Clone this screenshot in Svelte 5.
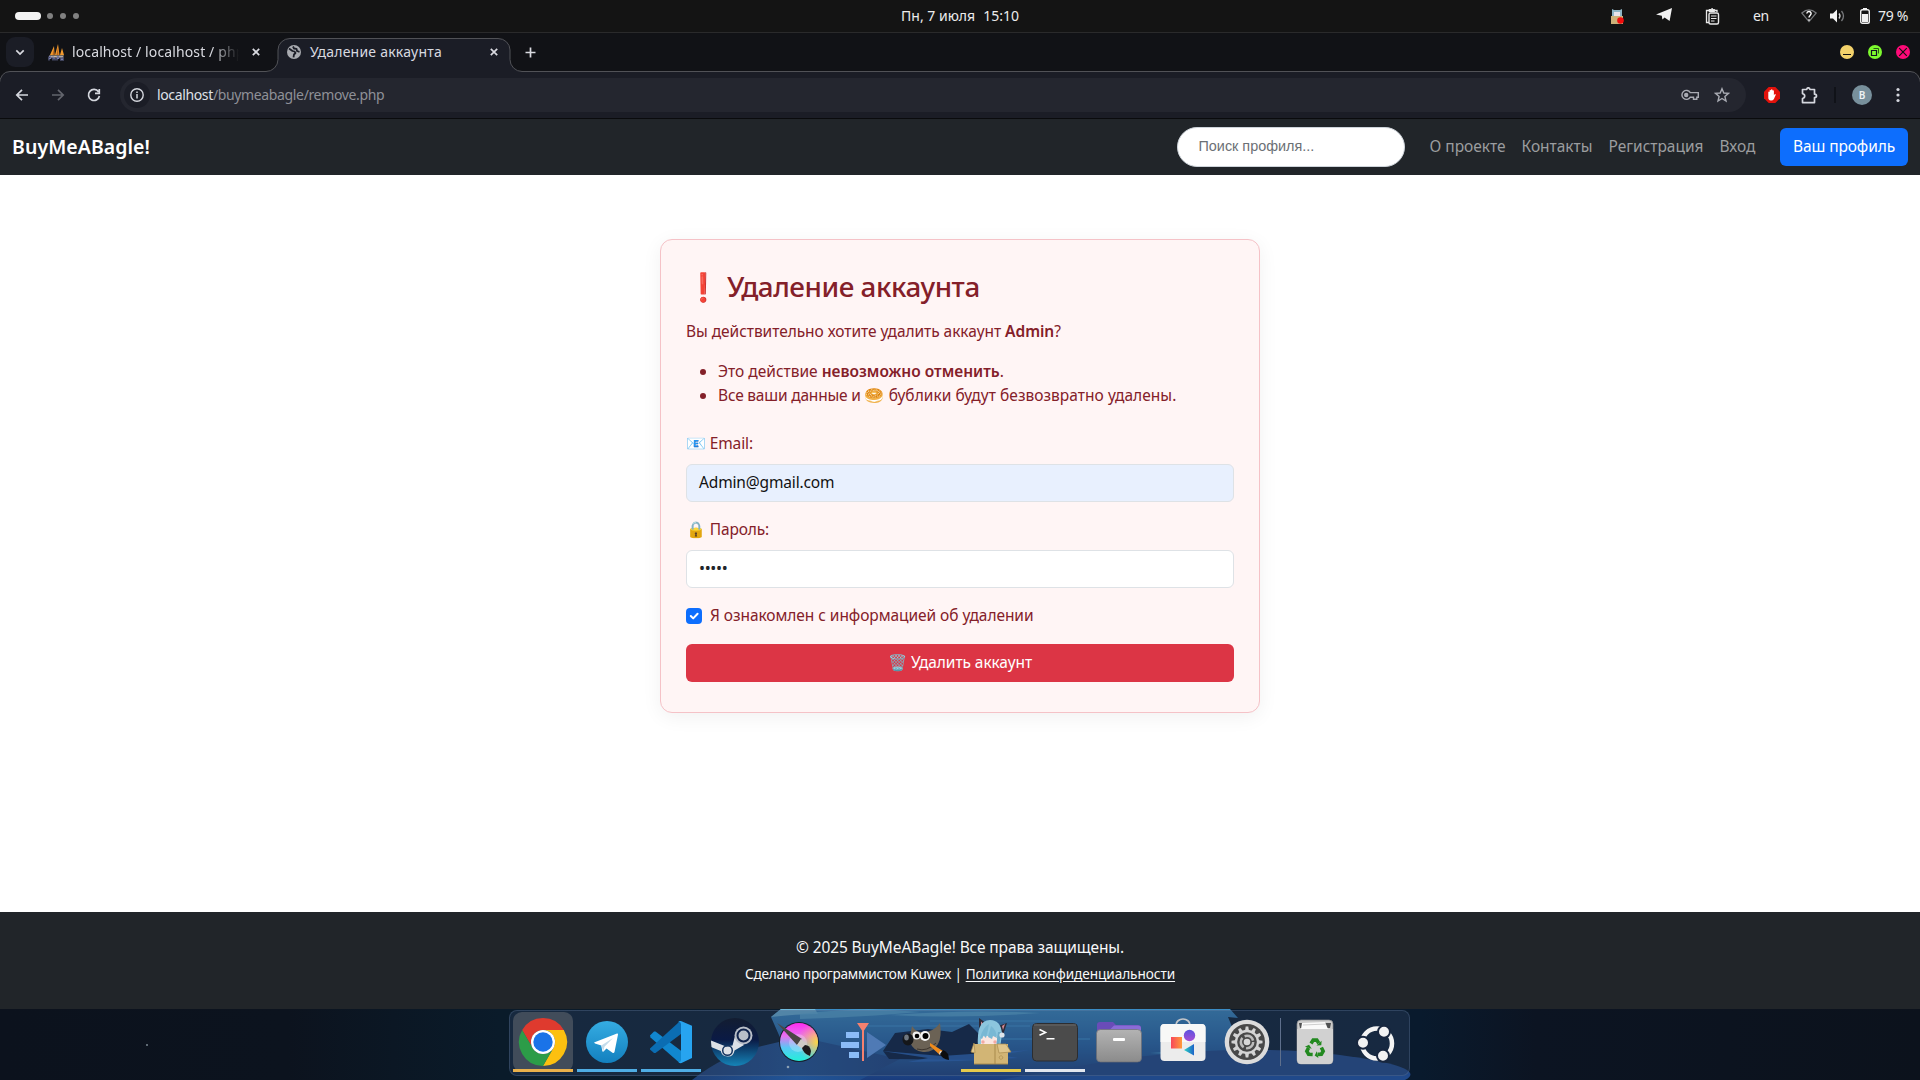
<script>
  const navLinks = ['О проекте', 'Контакты', 'Регистрация', 'Вход'];
  const teeth = Array.from({ length: 12 }, (_, i) => i * 30);
  let email = 'Admin@gmail.com';
  const mask = '•••••';
</script>

<div class="desktop">
  <header class="topbar">
    <div class="workspaces"><span class="pill"></span><i></i><i></i><i></i></div>
    <div class="clock"><span>Пн, 7 июля</span><span>15:10</span></div>
    <div class="tray">
      <svg class="ic-mascot" width="16" height="16" viewBox="0 0 16 16">
        <path d="M3 1l2 1h6l2-1v8H3z" fill="#8fb6c6" />
        <path d="M5 4h6v5H5z" fill="#e9e4ea" />
        <path d="M2 8h12v8H2z" fill="#cdb179" />
        <circle cx="11.5" cy="12.5" r="3.3" fill="#f20d0d" />
      </svg>
      <svg class="ic-plane" width="16" height="14" viewBox="0 0 16 14"><path d="M0 6.5L16 0l-2.4 13-5-3.6-2.2 2-.6-3.600z" fill="#f2f2f2" /></svg>
      <svg class="ic-clip" width="15" height="17" viewBox="0 0 15 17" fill="none" stroke="#e8e8e8">
        <path d="M4 2.500H1.500v12H4M9.500 2.500H12V4" stroke-width="1.300" />
        <path d="M4 3.500v-2h2L6.700.600h.8l.7.900h1.500v2z" fill="#e8e8e8" />
        <rect x="4" y="5" width="9.500" height="11" rx="1.500" stroke-width="1.400" />
        <path d="M6 8h5.500M6 10.500h5.500M6 13h3.500" />
      </svg>
      <span class="lang">en</span>
      <svg class="ic-wifi" width="16" height="14" viewBox="0 0 16 14" fill="none">
        <path d="M.8 4Q8-2.400 15.200 4L8 12.600z" stroke="#77797c" stroke-width="1.200" />
        <path d="M5.800 4.500c.3-3 4.600-2.400 4.300.2C9.900 6.400 8 6.500 8 8.500M8 10.300v1.500" stroke="#fff" stroke-width="1.400" />
      </svg>
      <svg class="ic-vol" width="15" height="14" viewBox="0 0 15 14" fill="none">
        <path d="M0 4.500h3L7 .5v13l-4-4H0z" fill="#f4f4f4" />
        <path d="M9 4.500q2 2.500 0 5" stroke="#d8d8d8" stroke-width="1.300" />
        <path d="M11.500 2q4 5 0 10" stroke="#77797c" stroke-width="1.300" />
      </svg>
      <svg class="ic-bat" width="10" height="16" viewBox="0 0 10 16">
        <path d="M3 0h4v2H3z" fill="#f2f2f2" />
        <rect x=".7" y="1.700" width="8.600" height="13.500" rx="1.800" fill="none" stroke="#f2f2f2" stroke-width="1.400" />
        <path d="M2 6h6v8H2z" fill="#f2f2f2" />
      </svg>
      <span class="pct">79 %</span>
    </div>
  </header>

  <section class="browser">
    <svg class="frame" width="1920" height="85" viewBox="0 0 1920 85">
      <path d="M-1 86V52Q.5 38.500 10 38.500H266a12 12 0 0 0 12-12V17A12 11.500 0 0 1 290 5.500H498a12 11.500 0 0 1 12 11.500V26.500a12 12 0 0 0 12 12H1910q9.500 0 11 13.500v34" fill="#1b1d26" stroke="#515257" />
    </svg>
    <div class="tabs">
      <button class="tabsearch" aria-label="Поиск вкладок"><svg width="10" height="7" viewBox="0 0 10 7"><path d="M1.300 1.300L5 5l3.700-3.700" /></svg></button>
      <div class="tab idle">
        <svg width="17" height="17" viewBox="0 0 17 17">
          <path d="M2 11L6 2l.6 9zM7 11L10 0l1.500 11zM12 11L14 4l2 7z" fill="#f29a2e" />
          <path d="M5.400 5l-.8 6h2zM10 3L8.500 11h2z" fill="#b8651b" />
          <path d="M1 11.500h15l-1.500 2H2z" fill="#c9b7a0" />
          <path d="M1 16.500v-4h2v2H1M5 12v4.500M5 14h2v2.500M9 16.500v-4h2v2H9M13 12.500v4l1-2 1 2v-4" fill="none" stroke="#777cae" />
        </svg>
        <span class="title">localhost / localhost / php</span>
        <svg class="x" width="8" height="8" viewBox="0 0 8 8"><path d="M.8.8l6.400 6.400M7.200.8L.8 7.200" /></svg>
      </div>
      <div class="tab live">
        <svg width="14" height="14" viewBox="0 0 14 14"><circle cx="7" cy="7" r="7" fill="#a9abb0" /><path d="M2 3.500L5.500 6l2 .5 1 1.500-1.500 1.500-.5 2.800M6 1.500l1 2 2.500.3L10 6l2.500.8" fill="none" stroke="#1b1d26" stroke-width="1.800" stroke-linejoin="round" /></svg>
        <span class="title">Удаление аккаунта</span>
        <svg class="x" width="8" height="8" viewBox="0 0 8 8"><path d="M.8.8l6.400 6.400M7.200.8L.8 7.200" /></svg>
      </div>
      <svg class="plus" width="11" height="11" viewBox="0 0 11 11"><path d="M5.500.5v10M.5 5.500h10" /></svg>
      <div class="winbtns">
        <svg width="14" height="14" viewBox="0 0 14 14"><circle cx="7" cy="7" r="7" fill="#f3d26b" /><path d="M3 9.500h8" stroke="#111" /></svg>
        <svg width="14" height="14" viewBox="0 0 14 14"><circle cx="7" cy="7" r="7" fill="#7dfa2e" /><path d="M3.500 5.500h5v5h-5z" fill="none" stroke="#112" stroke-width="1.200" /><path d="M5.500 3.500h5v5" fill="none" stroke="#2b5a18" /></svg>
        <svg width="14" height="14" viewBox="0 0 14 14"><circle cx="7" cy="7" r="7" fill="#ff0a78" /><path d="M3.200 3.200l7.600 7.600M10.800 3.200l-7.600 7.600" stroke="#111" stroke-width="1.200" /></svg>
      </div>
    </div>

    <div class="toolbar">
      <svg width="20" height="20" viewBox="0 0 20 20" class="line"><path d="M16 10H5M10 4.800L4.800 10l5.200 5.200" /></svg>
      <svg width="20" height="20" viewBox="0 0 20 20" class="line dim"><path d="M4 10h11M10 4.800l5.200 5.200-5.200 5.200" /></svg>
      <svg width="20" height="20" viewBox="0 0 20 20" class="line"><path d="M14.500 6.800A5.500 5.500 0 1 0 15.400 11M15.300 4v4.300H11" /></svg>
      <div class="url">
        <span class="info"><svg width="14" height="14" viewBox="0 0 14 14"><circle cx="7" cy="7" r="6.200" fill="none" stroke="#d5d7de" stroke-width="1.400" /><path d="M7 6v4.500M7 3.500v1.500" stroke="#d5d7de" stroke-width="1.500" /></svg></span>
        <span class="addr"><b>localhost</b>/buymeabagle/remove.php</span>
        <svg class="key" width="18" height="12" viewBox="0 0 18 12" fill="none" stroke="#a9abb3" stroke-width="1.400"><path d="M9.300 3.600H17.300V8.200H15.800v2H12.500v-2H9.300A4.500 4.500 0 1 1 9.300 3.600z" /><circle cx="5.200" cy="6" r="1.500" fill="#a9abb3" /></svg>
        <svg width="16" height="16" viewBox="0 0 16 16" fill="none" stroke="#a9abb3" stroke-width="1.400"><path d="M8 1.700l1.800 4.300 4.600.4-3.500 3 1.100 4.600L8 11.500 4 14l1.100-4.600-3.500-3 4.600-.4z" /></svg>
      </div>
      <svg class="block" width="16" height="16" viewBox="0 0 16 16"><path d="M4.700 0h6.600L16 4.700v6.600L11.300 16H4.700L0 11.300V4.700z" fill="#e3120b" /><path d="M4.300 7.500V5q.7-.8 1.300 0V3.300q.7-.8 1.400 0V2.700q.7-.8 1.500 0v.9q.8-.8 1.400.1v4.500l1-1.200q1 0 .9.800l-2 4.500q-1 1.500-3 1.300-2.600-.3-2.500-3z" fill="#fff" /></svg>
      <svg class="puzzle" width="17" height="17" viewBox="0 0 17 17" fill="none" stroke="#d5d7de" stroke-width="1.700"><path d="M1.500 2.500h4.200q.2-1.700 1.600-1.700t1.600 1.700h4.600v4.700q2 .2 2 1.700t-2 1.700v5H1.500v-4.100q2.200-.4 2.200-2.400T1.500 6.600z" stroke-linejoin="round" /></svg>
      <span class="sep"></span>
      <span class="avatar">B</span>
      <svg class="dots" width="4" height="16" viewBox="0 0 4 16" fill="#d5d7de"><circle cx="2" cy="2.500" r="1.600" /><circle cx="2" cy="8" r="1.600" /><circle cx="2" cy="13.500" r="1.600" /></svg>
    </div>
  </section>

  <nav class="navbar">
    <span class="brand">BuyMeABagle!</span>
    <div class="search">Поиск профиля...</div>
    <div class="links">
      {#each navLinks as link}<span>{link}</span>{/each}
    </div>
    <button class="profile">Ваш профиль</button>
  </nav>

  <main>
    <div class="card">
      <h2>❗ Удаление аккаунта</h2>
      <p>Вы действительно хотите удалить аккаунт <strong>Admin</strong>?</p>
      <ul>
        <li>Это действие <strong>невозможно отменить</strong>.</li>
        <li><span class="tight">Все ваши данные и</span> <span class="emoji">🥯</span> <span class="loose">бублики будут безвозвратно удалены.</span></li>
      </ul>
      <div class="label"><span class="emoji">📧</span> Email:</div>
      <div class="field auto">{email}</div>
      <div class="label"><span class="emoji">🔒</span> Пароль:</div>
      <div class="field secret">{mask}</div>
      <div class="check">
        <svg width="16" height="16" viewBox="0 0 16 16"><rect width="16" height="16" rx="4" fill="#0d6efd" /><path d="M4.800 8l2.400 2.400 4.400-4.600" fill="none" stroke="#fff" stroke-width="2" stroke-linecap="round" stroke-linejoin="round" /></svg>
        <span>Я ознакомлен с информацией об удалении</span>
      </div>
      <button class="danger">🗑️ Удалить аккаунт</button>
    </div>
  </main>

  <footer>
    <div class="copy">© 2025 BuyMeABagle! Все права защищены.</div>
    <div class="made"><span>Сделано программистом Kuwex |</span><u>Политика конфиденциальности</u></div>
  </footer>

  <section class="shelf">
    <svg class="wall" width="1920" height="71" viewBox="0 0 1920 71">
      <defs>
        <linearGradient id="night" x1="0" x2="1"><stop offset="0" stop-color="#0c121d" /><stop offset=".15" stop-color="#0c131e" /><stop offset=".26" stop-color="#0a1b2a" /><stop offset=".74" stop-color="#091a2d" /><stop offset=".8" stop-color="#0c1422" /><stop offset="1" stop-color="#0c121c" /></linearGradient>
        <linearGradient id="sea" x1="0" y1="0" x2="0" y2="1"><stop offset="0" stop-color="#3a8cc4" /><stop offset=".5" stop-color="#2668ab" /><stop offset="1" stop-color="#1a3c7c" /></linearGradient>
        <linearGradient id="hill" x1="0" y1="0" x2="1" y2="0"><stop offset="0" stop-color="#1f4178" /><stop offset=".5" stop-color="#215496" /><stop offset="1" stop-color="#1e4684" /></linearGradient>
      </defs>
      <rect width="1920" height="71" fill="url(#night)" />
      <circle cx="147" cy="36" r="1" fill="#7a8790" />
      <path d="M782 33L771 8 781 0H1230L1238 9 1228 8 1242 42V71H782z" fill="url(#sea)" />
      <path d="M692 71Q725 45 762 37L800 28 900 50 860 71z" fill="url(#hill)" />
      <path d="M1120 50Q1250 34 1340 46T1405 71H1000z" fill="#20498a" />
      <path d="M771 8l10-8h34l3 5q-22 0-47 3z" fill="#6fb9dc" />
      <path d="M800 5q60-8 120-2-55 5-120 7zM890 6q80-6 150-2-80 6-150 2z" fill="#62b4dc" opacity=".75" />
      <path d="M860 17h170M930 12h130M1000 30h90" stroke="#429bd8" stroke-width="1.500" opacity=".7" />
      <path d="M883 42l12-18 33-4 24 3 17-8 16 16 4 13-8 7-92-1z" fill="#071b3a" />
      <path d="M882 42l60 5 88-6-30 5 18 3-60 3-50 1 20-4z" fill="#2a6cc4" opacity=".8" />
      <path d="M1150 44l40-4-15 6z" fill="#46a0d0" opacity=".6" />
      <circle cx="788" cy="58" r="1.300" fill="#cfe6f2" />
    </svg>

    <div class="dock">
      <div class="slot active">
        <svg width="60" height="60" viewBox="0 0 60 60"><g transform="translate(6 6)">
          <path d="M3.200 12A24 24 0 0 1 44.800 12H24A12 12 0 0 0 13.600 30z" fill="#df3a2e" />
          <path d="M44.800 12A24 24 0 0 1 24 48L34.400 30A12 12 0 0 0 24 12z" fill="#fcc010" />
          <path d="M24 48A24 24 0 0 1 3.200 12L13.600 30A12 12 0 0 0 34.400 30z" fill="#2c9c48" />
          <circle cx="24" cy="24" r="12" fill="#fff" /><circle cx="24" cy="24" r="9.700" fill="#1a73e8" />
        </g></svg><i class="bar amber"></i>
      </div>
      <div class="slot">
        <svg width="60" height="60" viewBox="0 0 60 60">
          <defs><linearGradient id="tg" x2="0" y2="1"><stop stop-color="#35ace2" /><stop offset="1" stop-color="#1380bf" /></linearGradient></defs>
          <circle cx="30" cy="30" r="21" fill="url(#tg)" />
          <path d="M17 30.500L40 21.500q1.200-.2 1 1L37.500 40q-.6 1.600-2 .8L29.500 36.500l-3 3q-1 .7-1.200-.5L24.300 33.500 18 31.500z" fill="#fff" /><path d="M24.300 33.500L36 26l-8.500 8.800-1.300 4.400z" fill="#c4dceb" />
        </svg><i class="bar sky"></i>
      </div>
      <div class="slot">
        <svg width="60" height="60" viewBox="0 0 60 60">
          <path d="M9 23.500L13 19.500 14.500 19.600 41 39.500 40 51 37 49.500 9.500 25.500z" fill="#1187cf" />
          <path d="M9 36.500L37.500 10.500 40 9V22L14.500 41H13L9 37.500z" fill="#0b6db3" />
          <path d="M37 10.200q1.600-1.700 3.500-1L51 13.800V46L40.500 51q-2 .6-3.500-1.200 3 .8 3-2V12.200q0-2.800-3-2z" fill="#27a4f0" />
        </svg><i class="bar sky"></i>
      </div>
      <div class="slot">
        <svg width="60" height="60" viewBox="0 0 60 60">
          <defs><linearGradient id="st" x2="0" y2="1"><stop stop-color="#131d31" /><stop offset=".45" stop-color="#0a1a45" /><stop offset="1" stop-color="#1584b8" /></linearGradient>
          <clipPath id="stc"><circle cx="30" cy="30" r="24" /></clipPath></defs>
          <circle cx="30" cy="30" r="24" fill="url(#st)" />
          <g clip-path="url(#stc)"><path d="M5 28L21 34.500l6.500-1L30 24l9 9-9.500 5.500q-1 6.500-7 6T15.800 39L5 34.500z" fill="#dde1e6" />
          <circle cx="22.500" cy="38.500" r="4.800" fill="none" stroke="#14345f" stroke-width="1.500" />
          <circle cx="38.500" cy="23.500" r="9" fill="#b9bec8" /><circle cx="38.500" cy="23.500" r="6" fill="#b9bec8" stroke="#10224b" stroke-width="2" /></g>
        </svg>
      </div>
      <div class="slot">
        <svg width="60" height="60" viewBox="0 0 60 60">
          <defs><linearGradient id="k1" x2="0" y2="1"><stop stop-color="#ff2cf0" /><stop offset=".35" stop-color="#e573f0" /><stop offset=".65" stop-color="#58c8f5" /><stop offset="1" stop-color="#23f0d8" /></linearGradient>
          <radialGradient id="k2" cx="1" cy=".5" r=".55"><stop stop-color="#ffdc3a" /><stop offset="1" stop-color="#ffb070" stop-opacity="0" /></radialGradient></defs>
          <circle cx="30" cy="30" r="20" fill="#17202c" /><circle cx="30" cy="30" r="19" fill="url(#k1)" /><circle cx="30" cy="30" r="19" fill="url(#k2)" />
          <circle cx="29" cy="31" r="9" fill="#fff" opacity=".25" />
          <path d="M8 11L33 27 28 33z" fill="#4a4644" /><path d="M32 27l6 5-4 5-6-4z" fill="#cfcac6" /><path d="M36 33q5 0 6 6l-1 5q-7-3-8-8z" fill="#1d1a1c" />
        </svg>
      </div>
      <div class="slot">
        <svg width="60" height="60" viewBox="0 0 60 60">
          <path d="M13 20h13v6H13zM8 30h18v6H8zM16 40h10v6H16z" fill="#8bbcf7" />
          <path d="M34 20L53 33 34 46z" fill="#4f7ab5" />
          <path d="M24 11h12l-5 7.500V49h-2V18.500z" fill="#f5816f" />
        </svg>
      </div>
      <div class="slot">
        <svg width="60" height="60" viewBox="0 0 60 60">
          <path d="M15 14q4 6 9 6 12 1 19-9 2 14-2 21-5 9-15 8T13 30q0-9 2-16z" fill="#6b6255" />
          <path d="M20 37q10 3 19-6" stroke="#3c352e" fill="none" />
          <circle cx="19.500" cy="23.500" r="4" fill="#eee" /><circle cx="28" cy="24" r="5" fill="#f4f4f4" /><circle cx="20" cy="24" r="2.300" /><circle cx="28.500" cy="24" r="3" />
          <ellipse cx="11" cy="27.500" rx="5.500" ry="6" fill="#15171a" /><ellipse cx="9.500" cy="25.500" rx="2.300" ry="3" fill="#6f7780" />
          <path d="M33 31L46 39l-3 4-10-9z" fill="#ef8a1b" /><path d="M43 39l4 1-1 4-4-2z" fill="#ddd" /><path d="M46 38q6 2 6 10-7-1-9-6z" fill="#0c0c0e" />
        </svg>
      </div>
      <div class="slot">
        <svg width="60" height="60" viewBox="0 0 60 60">
          <path d="M18 16V6l7 5zM37 14l9-3-4 12z" fill="#2c2a38" /><path d="M20 9.500l3 3-3 3zM41 14l3-2-2 6z" fill="#d78a94" />
          <path d="M17 35Q15 8 29 8q11 0 12 14l-2 14z" fill="#8cc6de" />
          <path d="M20 24h16v9H20z" fill="#fbe6e0" /><path d="M19 26q3-11 9-14-1 7-3 14-2-1-2-3l-2 4zM27 25l3-11q5 3 6 12l-4-2-1 3z" fill="#78b8d4" />
          <circle cx="22" cy="30" r="1.700" fill="#f2a9a2" /><circle cx="34" cy="30" r="1.700" fill="#f2a9a2" />
          <path d="M37 20l3 0-2 15h-3z" fill="#6cabc8" /><circle cx="41" cy="23" r="2.600" fill="#dfe6ec" />
          <path d="M13 32h34v20H13z" fill="#d2b575" /><path d="M13 31L10 40l4 1zM36 32h9l5 8-12 1z" fill="#e0c68c" stroke="#a98b4d" stroke-width=".7" />
          <path d="M34 32v20M13 52h34" stroke="#a98b4d" /><path d="M38 45q3-3 4 1-3 3-4-1" fill="none" stroke="#b89a5a" />
        </svg><i class="bar yellow"></i>
      </div>
      <div class="slot">
        <svg width="60" height="60" viewBox="0 0 60 60">
          <rect x="7.500" y="11.500" width="45" height="37.500" rx="4" fill="#4b4b4b" stroke="#2c2d30" /><path d="M9 13h42" stroke="#686868" />
          <path d="M14.500 17.500l6 2.900-6 2.900M21.500 26.800h8" fill="none" stroke="#fff" stroke-width="1.600" />
        </svg><i class="bar white"></i>
      </div>
      <div class="slot">
        <svg width="60" height="60" viewBox="0 0 60 60">
          <defs><linearGradient id="fl" x2="0" y2="1"><stop stop-color="#b3b3b3" /><stop offset="1" stop-color="#8b8b8b" /></linearGradient></defs>
          <path d="M8 13q0-3 3-3h13l3 3h22q3 0 3 3v8H8z" fill="#6a4cb8" /><path d="M25 13.500h24q3 0 3 3v6H16z" fill="#8a6cd6" />
          <rect x="7.500" y="17.500" width="45" height="32.500" rx="4" fill="url(#fl)" stroke="#6f6f74" stroke-width=".7" /><rect x="24" y="26" width="12" height="3" rx="1" fill="#fff" />
        </svg>
      </div>
      <div class="slot">
        <svg width="60" height="60" viewBox="0 0 60 60">
          <defs><linearGradient id="s1" x2="1"><stop stop-color="#f8475b" /><stop offset="1" stop-color="#ff9a3a" /></linearGradient><linearGradient id="s2" x2="0" y2="1"><stop stop-color="#5b53e0" /><stop offset="1" stop-color="#a94fd4" /></linearGradient><linearGradient id="s3" x2="1"><stop stop-color="#2ad3c4" /><stop offset="1" stop-color="#1e63c8" /></linearGradient></defs>
          <path d="M23 14V13a7 6 0 0 1 14 0v2" fill="none" stroke="#c5c7ca" stroke-width="1.700" />
          <rect x="7.500" y="12" width="45" height="37" rx="4" fill="#ececec" /><path d="M7.500 30V16q0-4 4-4h37q4 0 4 4v14z" fill="#f8f8f7" />
          <rect x="18" y="25" width="11" height="11.500" fill="url(#s1)" /><circle cx="36.500" cy="23.500" r="5.700" fill="url(#s2)" /><path d="M31 38l10-6v11.500z" fill="url(#s3)" />
        </svg>
      </div>
      <div class="slot">
        <svg width="60" height="60" viewBox="0 0 60 60">
          <circle cx="30" cy="30" r="22.300" fill="#dcdcdc" /><circle cx="30" cy="30" r="18" fill="#484848" />
          <g fill="#d4d4d4">{#each teeth as angle}<path d="M28 19l.7-4.500h2.600L32 19z" transform="rotate({angle} 30 30)" />{/each}</g>
          <circle cx="30" cy="30" r="11" fill="none" stroke="#d4d4d4" stroke-width="2.300" /><circle cx="30" cy="30" r="6.200" fill="none" stroke="#bcbcbc" stroke-width="2.500" stroke-dasharray="10.500 2.500" /><circle cx="30" cy="30" r="3.300" fill="#d8d8d8" />
        </svg>
      </div>
      <span class="divider"></span>
      <div class="slot">
        <svg width="60" height="60" viewBox="0 0 60 60">
          <rect x="12" y="8" width="36" height="44" rx="4" fill="#cbcbcb" stroke="#88898c" stroke-width=".7" /><path d="M14 11h32l-1 5H15z" fill="#4f5051" />
          <path d="M17 11l23-1 3 7H16z" fill="#fafafa" /><path d="M18 13l23-1" stroke="#bbb" stroke-width=".7" /><path d="M12 17h36v30q0 5-4 5H16q-4 0-4-5z" fill="#d1d1d1" />
          <g fill="none" stroke="#22891f" stroke-width="3.600">{#each [0, 120, 240] as angle}<g transform="rotate({angle} 30 36.500)"><path d="M26 31.500l2.200-3.400h3.600l2 3.200" /><path d="M31.500 33.600l4.800-.4.300-4.500z" fill="#22891f" stroke="none" /></g>{/each}</g>
        </svg>
      </div>
      <div class="slot last">
        <svg width="60" height="60" viewBox="0 0 60 60">
          <circle cx="31" cy="31.500" r="15" fill="none" stroke="#f4f4f4" stroke-width="4.500" />
          <g fill="#f2f2f2" stroke="#18263e" stroke-width="2"><circle cx="17" cy="30.700" r="6" /><circle cx="38" cy="19.700" r="6" /><circle cx="37" cy="43.700" r="6" /></g>
        </svg>
      </div>
    </div>
  </section>
</div>

<style>
  :global(body) { margin: 0; background: #fff; overflow: hidden; }
  * { box-sizing: border-box; }
  svg { display: block; flex: none; }
  button { border: 0; padding: 0; font: inherit; color: inherit; }
  .desktop { width: 1920px; height: 1080px; display: flex; flex-direction: column; font-family: "Noto Sans", "Noto Color Emoji", sans-serif; font-size: 15.5px; line-height: 24px; white-space: nowrap; }

  .topbar { height: 33px; flex: none; display: grid; grid-template-columns: 1fr auto 1fr; align-items: center; background: #141414; border-bottom: 1px solid #2a2a2b; color: #ececec; font-size: 14px; }
  .workspaces { display: flex; align-items: center; gap: 7px; padding-left: 15px; }
  .workspaces .pill { width: 26px; height: 8px; border-radius: 4px; background: #f4f4f4; margin-right: -1px; }
  .workspaces i { width: 6px; height: 6px; border-radius: 50%; background: #818181; }
  .clock { display: flex; gap: 8px; }
  .tray { display: flex; align-items: center; justify-content: flex-end; padding-right: 11px; }
  .ic-plane { margin-left: 31px; margin-top: -2px; }
  .ic-clip { margin-left: 33px; }
  .lang { margin-left: 33px; width: 16px; letter-spacing: -0.28px; }
  .ic-wifi { margin-left: 32px; }
  .ic-vol { margin-left: 13px; }
  .ic-bat { margin-left: 15px; }
  .pct { margin-left: 8px; width: 31px; letter-spacing: -0.32px; }

  .browser { position: relative; height: 86px; flex: none; background: #111216; border-bottom: 1px solid #0a0b0d; }
  .frame { position: absolute; left: 0; top: 0; }
  .tabs { position: relative; height: 38px; display: flex; align-items: center; padding-left: 6px; font-size: 14px; color: #d9dae0; }
  .tabsearch { width: 28px; height: 30px; border-radius: 9px; background: #1b1d26; display: grid; place-items: center; }
  .tabsearch path, .x path, .plus path { fill: none; stroke: #d9dae0; stroke-width: 1.7; }
  .tab { display: flex; align-items: center; }
  .tab.idle { width: 212px; margin-left: 14px; }
  .tab.idle .title { margin-left: 7px; width: 168px; letter-spacing: 0.12px; mask-image: linear-gradient(90deg, #000 140px, transparent 167px); }
  .tab.idle .x { margin-left: 12px; }
  .tab.live { width: 211px; margin-left: 27px; }
  .tab.live .title { margin-left: 9px; letter-spacing: 0.23px; flex: 1; }
  .plus { margin-left: 27px; }
  .winbtns { display: flex; gap: 14px; margin-left: auto; padding-right: 10px; }

  .toolbar { position: relative; height: 47px; display: flex; align-items: center; gap: 16px; padding: 1px 0 0 12px; }
  .line { fill: none; stroke: #d5d7de; stroke-width: 1.7; }
  .line.dim { stroke: #63656d; }
  .url { width: 1626px; height: 34px; border-radius: 17px; background: #24262f; display: flex; align-items: center; padding: 0 16px 0 4px; }
  .info { width: 26px; height: 26px; border-radius: 50%; background: #1b1d26; display: grid; place-items: center; margin-right: 7px; }
  .addr { flex: 1; font-size: 14px; letter-spacing: -0.36px; color: #8e9097; }
  .addr b { font-weight: 400; color: #dfe1e8; }
  .key { margin-right: 15px; }
  .block { margin-left: 2px; }
  .puzzle { margin-left: 5px; }
  .sep { width: 2px; height: 16px; background: #101218; }
  .avatar { width: 20px; height: 20px; border-radius: 50%; background: #78909c; color: #eef3f5; font-size: 10px; font-weight: 600; line-height: 20px; text-align: center; }
  .dots { margin-left: 8px; }

  .navbar { height: 56px; flex: none; display: flex; align-items: center; padding: 0 12px; background: #212529; color: #9b9d9f; }
  .brand { font-size: 19.5px; font-weight: 600; color: #fff; letter-spacing: 0.05px; margin-right: auto; }
  .search { width: 228px; height: 40px; border: 1px solid #ced4da; border-radius: 20px; background: #fff; padding: 0 20.5px; color: #6b7075; font: 14.4px/36px "Liberation Sans", sans-serif; }
  .links { display: flex; gap: 16px; margin-left: 24.5px; width: 326.500px; letter-spacing: -0.02px; }
  .links span { position: relative; top: -1px; }
  .profile { width: 128px; height: 38px; margin-left: 24px; border-radius: 6px; background: #0d6efd; color: #fff; letter-spacing: -0.11px; padding-bottom: 2px; }

  main { flex: 1; display: flex; justify-content: center; align-items: flex-start; padding-top: 64px; background: #fff; }
  .card { width: 600px; height: 474px; border: 1px solid #f5c2c7; border-radius: 12px; background: #fff5f5; box-shadow: 0 4px 20px rgba(0, 0, 0, 0.06); padding: 26px 25px 0; color: #842029; }
  h2 { margin: 0 0 13px; font-size: 27.8px; font-weight: 500; line-height: 40px; height: 40px; letter-spacing: -0.45px; }
  p { margin: 0 0 16px; height: 24px; letter-spacing: -0.05px; }
  strong { font-weight: 600; }
  ul { margin: 0 0 24px; padding-left: 32px; }
  li { height: 24px; }
  .tight { letter-spacing: -0.2px; }
  .loose { letter-spacing: 0.03px; }
  .emoji { font-size: 16px; line-height: 1; }
  .label { height: 24px; margin-bottom: 9px; letter-spacing: -0.12px; }
  .field { height: 38px; border: 1px solid #dee2e6; border-radius: 6px; background: #fff; padding: 0 12px; line-height: 35px; color: #212529; margin-bottom: 15px; }
  .field.auto { background: #e8f0fe; color: #111; letter-spacing: -0.15px; }
  .field.secret { font-size: 16px; letter-spacing: -0.35px; }
  .check { height: 24px; display: flex; align-items: center; gap: 8px; margin-bottom: 17px; letter-spacing: -0.06px; }
  .check svg { margin-top: 2px; }
  .danger { width: 100%; height: 38px; border-radius: 6px; background: #dc3545; color: #fff; letter-spacing: -0.08px; padding-bottom: 2px; }

  footer { height: 97px; flex: none; background: #212529; color: #f8f9fa; display: flex; flex-direction: column; align-items: center; padding-top: 23px; }
  .copy { letter-spacing: -0.115px; }
  .made { display: flex; gap: 4px; margin-top: 4px; font-size: 13.6px; line-height: 22px; }
  .made span { letter-spacing: -0.24px; }
  .made u { letter-spacing: -0.05px; text-underline-offset: 2px; }

  .shelf { position: relative; height: 71px; flex: none; display: flex; justify-content: center; align-items: flex-start; padding-top: 1px; }
  .wall { position: absolute; left: 0; top: 0; }
  .dock { position: relative; width: 901px; height: 66px; left: -0.5px; border: 1px solid rgba(110, 140, 175, 0.28); border-radius: 8px; background: rgba(42, 62, 92, 0.42); display: flex; gap: 4px; padding: 1px 3px; }
  .slot { position: relative; width: 60px; height: 60px; flex: none; border-radius: 9px; }
  .slot.active { background: linear-gradient(#414c5a 58px, transparent 58px); }
  .bar { position: absolute; left: 0; bottom: 0; width: 60px; height: 3px; }
  .amber { background: #e9b04b; }
  .sky { background: #4fade4; }
  .yellow { background: #e5c94c; }
  .white { background: #e2e6ee; }
  .divider { width: 1px; height: 48px; margin: 6px 0 0 -1px; background: #5e6f8c; }
  .slot.last { margin-left: -3px; }
</style>
